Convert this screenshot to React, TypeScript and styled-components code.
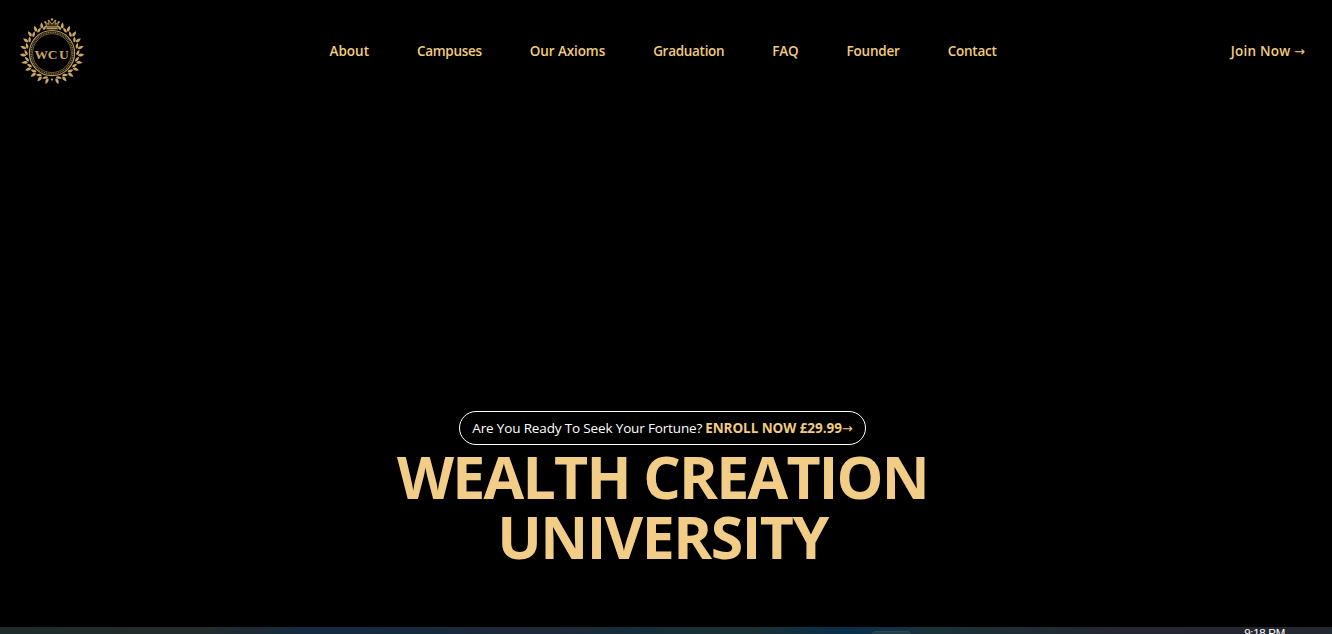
import React from "react";
import styled, { createGlobalStyle } from "styled-components";

const GlobalStyle = createGlobalStyle`
  *, *::before, *::after { box-sizing: border-box; }
  body {
    margin: 0;
    background: #000;
    overflow: hidden;
    font-family: "Open Sans", "Noto Sans", sans-serif;
  }
`;

const Page = styled.div`
  display: flex;
  flex-direction: column;
  height: 634px;
  background: #000;
`;

const Header = styled.header`
  display: grid;
  grid-template-columns: 1fr auto 1fr;
  align-items: center;
  height: 102px;
  padding: 0 26px 0 20px;
`;

const Nav = styled.nav`
  display: flex;
  gap: 48px;
`;

const NavLink = styled.a<{ $tracking: number }>`
  font-size: 13.5px;
  line-height: 24px;
  font-weight: 600;
  color: #f2cb80;
  white-space: nowrap;
  letter-spacing: ${(p) => p.$tracking}px;
`;

const JoinLink = styled(NavLink)`
  justify-self: end;
  padding-right: 1px;
`;

const Arrow = styled.span`
  font-family: "DejaVu Sans", sans-serif;
  font-size: 13px;
  font-weight: 400;
  line-height: 1;
  letter-spacing: 0;
`;

const Hero = styled.main`
  flex: 1;
  display: flex;
  flex-direction: column;
  align-items: center;
  padding: 309px 7px 0 0;
`;

const Pill = styled.div`
  display: flex;
  align-items: center;
  justify-content: center;
  gap: 3px;
  width: 407px;
  height: 34px;
  border: 1px solid #fff;
  border-radius: 17px;
  color: #fff;
  font-size: 13.5px;
  line-height: 24px;
  white-space: nowrap;
`;

const Question = styled.span`
  letter-spacing: -0.15px;
`;

const Enroll = styled.a`
  font-weight: 700;
  color: #f2cb80;
  letter-spacing: -0.06px;
`;

const Title = styled.h1`
  margin: 1px 0 0;
  font-size: 59px;
  line-height: 60px;
  font-weight: 700;
  color: #f2cd88;
  text-align: center;
  white-space: nowrap;
`;

const TitleLine = styled.span<{ $tracking: number }>`
  display: block;
  letter-spacing: ${(p) => p.$tracking}px;
`;

const Taskbar = styled.footer`
  display: flex;
  justify-content: space-between;
  height: 7px;
  overflow: hidden;
  padding: 0 47px 0 872px;
  background: linear-gradient(
    90deg,
    #1e2c2c 0,
    #232b2b 130px,
    #232b2d 210px,
    #142b41 310px,
    #172a3b 440px,
    #1f2838 550px,
    #142f3b 640px,
    #1b3034 745px,
    #092f4b 850px,
    #18323a 930px,
    #1e2d34 1010px,
    #24272f 1130px,
    #24262f 1250px,
    #22292f 1332px
  );
`;

const ActiveApp = styled.div`
  width: 39px;
  height: 20px;
  margin-top: 4px;
  border-top: 1px solid #304852;
  border-radius: 4px;
  background: #243e49;
`;

const Clock = styled.time`
  font-family: "Liberation Sans", sans-serif;
  font-size: 11.5px;
  line-height: 13px;
  letter-spacing: -0.3px;
  color: #fff;
  white-space: nowrap;
`;

const LEAF = "M0 0C-2.3 -1.2 -2.4 -3.8 0 -6.8C2.3 -3.8 2.1 -1.2 0 0Z";

function Wreath() {
  const steps = [9, 24, 39, 54, 69, 84, 99, 114, 129, 144, 158];
  return (
    <>
      {[1, -1].map((side) => (
        <g key={side} transform={`translate(32 35.6) scale(${side} 1)`}>
          {steps.map((a) => (
            <g key={a} transform={`rotate(${180 - a}) translate(0 -25.6)`}>
              <path d={LEAF} transform="translate(.3 -.4) rotate(-16) scale(.85 .95)" />
              <path d={LEAF} transform="translate(0 .8) rotate(-70) scale(.75 .9)" />
            </g>
          ))}
        </g>
      ))}
    </>
  );
}

function Logo() {
  return (
    <svg width="64" height="68" viewBox="0 0 64 68" fill="#c9a766" role="img" aria-label="WCU">
      <Wreath />
      <circle cx="32" cy="36.1" r="22.6" fill="#000" stroke="#b6965b" strokeWidth="1.2" />
      <circle cx="32" cy="36.1" r="20.9" fill="none" stroke="#8a7246" strokeWidth="1.4" strokeDasharray="1.2 .6" />
      <circle cx="32" cy="36.1" r="19.4" fill="none" stroke="#9d8250" strokeWidth=".7" />
      <path d="M26 10.2H38.2L37.8 12.4H26.4Z" stroke="#000" strokeWidth=".5" />
      <path
        d="M26.8 9.8L25.2 4.8L28.4 7.4L29.2 3.8L32 7.2L34.8 3.8L35.6 7.4L38.8 4.8L37.2 9.8Z"
        fill="#3a2f1b"
        stroke="#c9a766"
        strokeWidth=".9"
      />
      <circle cx="32" cy="2.4" r="1.2" />
      <circle cx="28.6" cy="3.6" r=".9" />
      <circle cx="35.4" cy="3.6" r=".9" />
      <circle cx="25.1" cy="4.9" r=".9" />
      <circle cx="38.9" cy="4.9" r=".9" />
      <circle cx="32" cy="62.6" r="1.1" />
      <text
        x="14.4 27.7 38.9"
        y="41.6"
        fontFamily="'Liberation Serif', serif"
        fontSize="13.5"
        fontWeight="700"
        fill="#c9a766"
      >
        WCU
      </text>
    </svg>
  );
}

const links = [
  { label: "About", tracking: 0 },
  { label: "Campuses", tracking: -0.3 },
  { label: "Our Axioms", tracking: -0.1 },
  { label: "Graduation", tracking: -0.3 },
  { label: "FAQ", tracking: -0.2 },
  { label: "Founder", tracking: -0.2 },
  { label: "Contact", tracking: -0.25 },
];

export default function App() {
  return (
    <>
      <GlobalStyle />
      <Page>
        <Header>
          <Logo />
          <Nav>
            {links.map((l) => (
              <NavLink key={l.label} $tracking={l.tracking}>
                {l.label}
              </NavLink>
            ))}
          </Nav>
          <JoinLink $tracking={0.2}>
            Join Now <Arrow>→</Arrow>
          </JoinLink>
        </Header>
        <Hero>
          <Pill>
            <Question>Are You Ready To Seek Your Fortune?</Question>
            <Enroll>
              ENROLL NOW £29.99<Arrow>→</Arrow>
            </Enroll>
          </Pill>
          <Title>
            <TitleLine $tracking={-1.78}>WEALTH CREATION</TitleLine>
            <TitleLine $tracking={-1.5}>UNIVERSITY</TitleLine>
          </Title>
        </Hero>
        <Taskbar>
          <ActiveApp />
          <Clock>9:18 PM</Clock>
        </Taskbar>
      </Page>
    </>
  );
}
